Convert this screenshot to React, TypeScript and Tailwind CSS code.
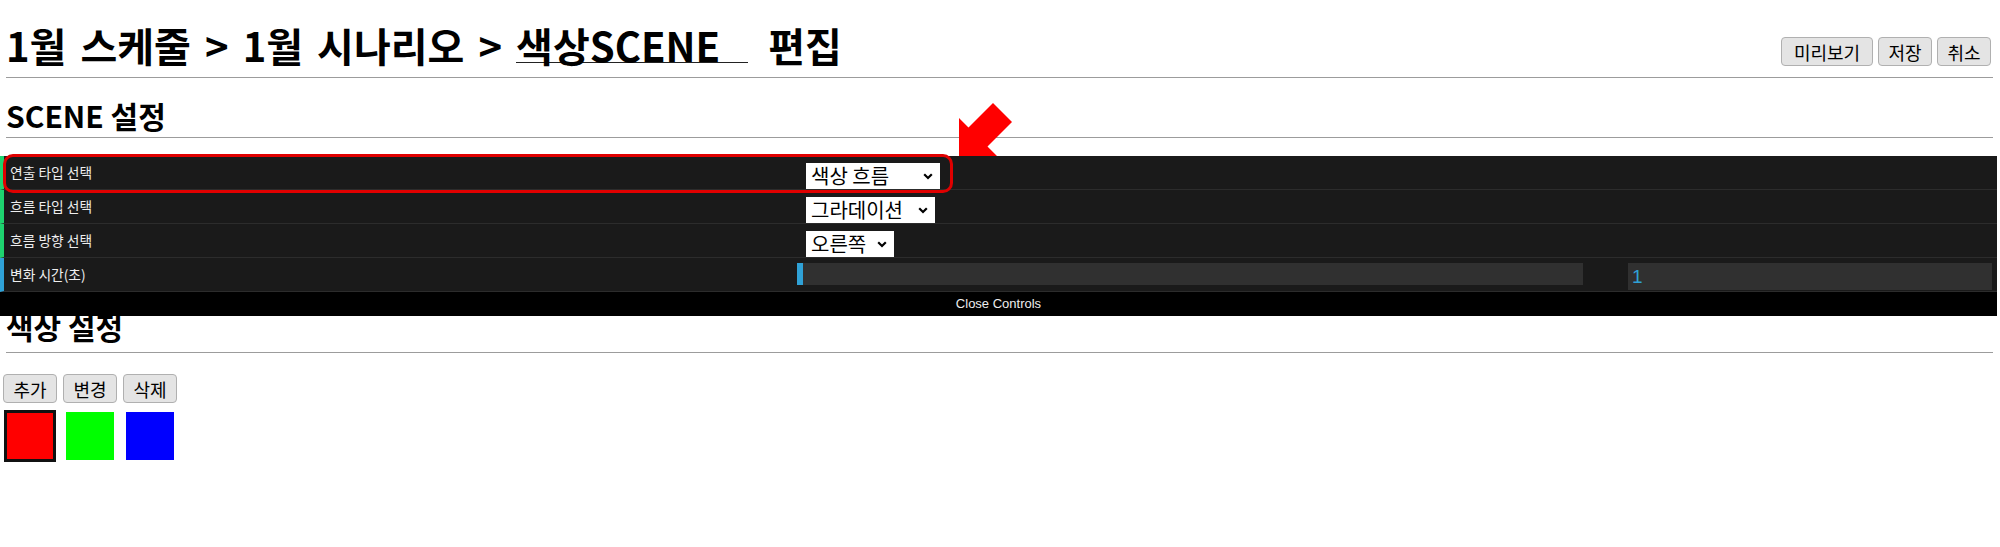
import React from 'react';

const rows = [
	{ label: '연출 타입 선택', value: '색상 흐름', width: 'w-[134px]', bar: 'border-l-[#1ed36f]' },
	{ label: '흐름 타입 선택', value: '그라데이션', width: 'w-[129px]', bar: 'border-l-[#1ed36f]' },
	{ label: '흐름 방향 선택', value: '오른쪽', width: 'w-[88px]', bar: 'border-l-[#1ed36f]' },
];

function Chevron() {
	return (
		<svg width="10" height="7" viewBox="0 0 10 7" className="shrink-0">
			<path d="M1.2 1.2 5 5 8.8 1.2" fill="none" stroke="#000" strokeWidth="2.2" />
		</svg>
	);
}

function SelectBox({ value, width }: { value: string; width: string }) {
	return (
		<div className={`ml-[9px] mt-[7px] flex h-[26px] items-center justify-between bg-white pl-[5px] pr-[7px] ${width}`}>
			<span className="text-[20px] leading-[26px] text-black">{value}</span>
			<Chevron />
		</div>
	);
}

function GrayButton({ children, wide }: { children: React.ReactNode; wide?: boolean }) {
	return (
		<button
			className={`flex h-[29px] items-center justify-center rounded-[4px] border border-[#b0b0b0] bg-[#e4e4e4] text-[18px] leading-none text-black ${
				wide ? 'w-[92px]' : 'w-[54px]'
			}`}>
			{children}
		</button>
	);
}

export default function App() {
	return (
		<div className="relative h-[547px] w-[2000px] overflow-hidden bg-white font-['Noto_Sans_CJK_KR',sans-serif] text-black">
			{/* Title bar */}
			<div className="flex h-[77px] items-start justify-between pl-[6px] pr-[9px] pt-[21px]">
				<h1 className="whitespace-nowrap text-[40px] font-bold leading-[48px] [word-spacing:5px]">
					1월 스케줄 &gt; 1월 시나리오 &gt;{' '}
					<span className="mr-[6px] inline-block h-[42px] w-[232px] border-b-[1.5px] border-[#222] align-top [word-spacing:0]">
						색상SCENE
					</span>{' '}
					편집
				</h1>
				<div className="mt-[16px] flex gap-[5px]">
					<GrayButton wide>미리보기</GrayButton>
					<GrayButton>저장</GrayButton>
					<GrayButton>취소</GrayButton>
				</div>
			</div>
			<div className="ml-[6px] mr-[7px] border-t border-[#9c9c9c]" />

			{/* SCENE 설정 */}
			<h2 className="mb-[4px] ml-[6px] mt-[19px] text-[30px] font-bold leading-[36px]">SCENE 설정</h2>
			<div className="ml-[6px] mr-[7px] border-t border-[#9c9c9c]" />

			{/* controls panel */}
			<div className="relative z-10 mr-[3px] mt-[18px]">
				{rows.map((r) => (
					<div
						key={r.label}
						className={`flex h-[34px] border-b border-l-4 border-b-[#2c2c2c] bg-[#1a1a1a] ${r.bar}`}>
						<div className="w-[793px] pl-[6px] text-[13.75px] leading-[33px] text-[#eee]">{r.label}</div>
						<SelectBox value={r.value} width={r.width} />
					</div>
				))}
				<div className="flex h-[34px] border-b border-l-4 border-b-[#2c2c2c] border-l-[#2fa1d6] bg-[#1a1a1a]">
					<div className="w-[793px] pl-[6px] text-[13.75px] leading-[33px] text-[#eee]">변화 시간(초)</div>
					<div className="mt-[5px] h-[22px] w-[786px] bg-[#303030]">
						<div className="h-full w-[6px] bg-[#2fa1d6]" />
					</div>
					<div className="ml-[45px] mt-[5px] h-[27px] w-[364px] bg-[#303030] pl-[4px] font-['Liberation_Sans',sans-serif] text-[19px] leading-[27px] text-[#2fa1d6]">
						1
					</div>
				</div>
				<div className="h-[24px] bg-black text-center font-['Liberation_Sans',sans-serif] text-[13px] leading-[24px] text-[#eee]">
					Close Controls
				</div>
			</div>

			{/* 색상 설정 */}
			<h2 className="mb-[8px] ml-[6px] mt-[-8px] text-[30px] font-bold leading-[36px]">색상 설정</h2>
			<div className="ml-[6px] mr-[7px] border-t border-[#9c9c9c]" />

			<div className="ml-[3px] mt-[21px] flex gap-[6px]">
				<GrayButton>추가</GrayButton>
				<GrayButton>변경</GrayButton>
				<GrayButton>삭제</GrayButton>
			</div>
			<div className="ml-[6px] mt-[9px] flex gap-[12px]">
				<div className="-m-[2px] h-[52px] w-[52px] border-[3px] border-[#111] bg-[#ff0000]" />
				<div className="h-[48px] w-[48px] bg-[#00ff00]" />
				<div className="h-[48px] w-[48px] bg-[#0000ff]" />
			</div>

			{/* annotation */}
			<div className="pointer-events-none absolute left-[3px] top-[154px] z-20 h-[39px] w-[950px] rounded-[10px] border-[3px] border-[#e00000]" />
			<svg
				className="pointer-events-none absolute left-[950px] top-[95px] z-20"
				width="70"
				height="70"
				viewBox="950 95 70 70">
				<polygon
					points="959,156 959,118 968.5,127.5 993,103 1012,122 987.5,146.5 997,156"
					fill="#ff0000"
				/>
			</svg>
		</div>
	);
}
